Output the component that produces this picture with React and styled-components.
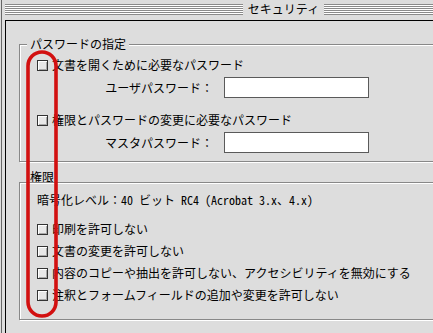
import React from 'react'
import styled, { createGlobalStyle } from 'styled-components'

const Global = createGlobalStyle`
  html, body {
    margin: 0;
    padding: 0;
    background: #dddddd;
    overflow: hidden;
  }
  body {
    font-family: "Noto Sans CJK JP", "Noto Sans", sans-serif;
    font-size: 12px;
    color: #000;
  }
`

const permissions = [
  '印刷を許可しない',
  '文書の変更を許可しない',
  '内容のコピーや抽出を許可しない、アクセシビリティを無効にする',
  '注釈とフォームフィールドの追加や変更を許可しない',
]

export default function App() {
  return (
    <Page>
      <Global />
      <Frame>
        <TitleBar>
          <Stripes />
          <Title>セキュリティ</Title>
          <Stripes />
        </TitleBar>
        <Content>
          <Group>
            <Legend>パスワードの指定</Legend>
            <GroupBody>
              <Block>
                <CheckRow>
                  <Box />
                  <span>文書を開くために必要なパスワード</span>
                </CheckRow>
                <FieldRow>
                  <FieldLabel>ユーザパスワード：</FieldLabel>
                  <Input />
                </FieldRow>
              </Block>
              <Block>
                <CheckRow>
                  <Box />
                  <span>権限とパスワードの変更に必要なパスワード</span>
                </CheckRow>
                <FieldRow>
                  <FieldLabel>マスタパスワード：</FieldLabel>
                  <Input />
                </FieldRow>
              </Block>
            </GroupBody>
          </Group>

          <Heading>権限</Heading>
          <Panel>
            <TextRow>
              暗号化レベル：<Latin>40 </Latin>ビット<Latin> RC4 (Acrobat 3.x</Latin>、<Latin>4.x)</Latin>
            </TextRow>
            <CheckList>
              {permissions.map((t) => (
                <CheckRow key={t}>
                  <Box />
                  <span>{t}</span>
                </CheckRow>
              ))}
            </CheckList>
          </Panel>
        </Content>
      </Frame>

      <Mark width="32" height="268" viewBox="0 0 32 268">
        <rect x="2" y="2" width="28" height="264" rx="14" ry="14" fill="none" stroke="#d21010" strokeWidth="3.6" />
      </Mark>
    </Page>
  )
}

const Page = styled.div`
  position: relative;
  width: 433px;
  height: 333px;
  overflow: hidden;
`

const Frame = styled.div`
  width: 560px;
  height: 333px;
  margin-left: 1px;
  border-left: 1px solid #666;
  display: flex;
  flex-direction: column;
`

const TitleBar = styled.div`
  height: 20px;
  box-sizing: border-box;
  padding: 4px 0 0 3px;
  display: flex;
  align-items: flex-start;
`

const Stripes = styled.div`
  flex: 1;
  height: 11px;
  background: repeating-linear-gradient(to bottom, #8a8a8a 0 1px, #ffffff 1px 2px);
`

const Title = styled.div`
  padding: 0 5px;
  margin-top: -1px;
  line-height: 12px;
`

const Content = styled.div`
  flex: 1;
  margin-left: 3px;
  border-top: 1px solid #000;
  border-left: 1px solid #000;
  padding: 15px 0 0 13px;
  display: flex;
  flex-direction: column;
  align-items: stretch;
`

const Group = styled.fieldset`
  width: 500px;
  margin: 0;
  padding: 5px 0 8px 0;
  border: 1px solid #888;
  box-shadow: inset 1px 1px 0 #fff, 1px 1px 0 #fff;
  min-inline-size: 0;
`

const Legend = styled.legend`
  margin-left: 7px;
  padding: 0 3px;
  line-height: 16px;
  background: #dddddd;
`

const GroupBody = styled.div`
  padding-left: 17px;
  display: flex;
  flex-direction: column;
  gap: 14px;
`

const Block = styled.div`
  display: flex;
  flex-direction: column;
  gap: 4px;
`

const CheckRow = styled.div`
  display: flex;
  align-items: center;
  gap: 4px;
  height: 16px;
  line-height: 16px;
  white-space: nowrap;
`

const Box = styled.span`
  width: 11px;
  height: 11px;
  box-sizing: border-box;
  border: 1px solid #333;
  background: #e8e8e8;
  box-shadow: inset 1px 1px 0 #fff, inset -1px -1px 0 #a8a8a8;
  flex: none;
`

const FieldRow = styled.div`
  display: flex;
  align-items: center;
  gap: 11px;
  height: 21px;
`

const FieldLabel = styled.span`
  width: 176px;
  text-align: right;
  white-space: nowrap;
`

const Input = styled.div`
  width: 145px;
  height: 21px;
  box-sizing: border-box;
  border: 1px solid #5a5a5a;
  background: #fff;
`

const Heading = styled.div`
  margin-top: 9px;
  padding-left: 11px;
  height: 11px;
  line-height: 12px;
`

const Panel = styled.div`
  width: 502px;
  box-sizing: border-box;
  padding: 9px 0 16px 17px;
  border: 1px solid #888;
  box-shadow: inset 1px 1px 0 #fff, 1px 1px 0 #fff;
  display: flex;
  flex-direction: column;
  gap: 13px;
`

const TextRow = styled.div`
  height: 16px;
  line-height: 16px;
  white-space: nowrap;
`

const Latin = styled.span`
  font-feature-settings: "hwid";
`

const CheckList = styled.div`
  display: flex;
  flex-direction: column;
  gap: 6px;
`

const Mark = styled.svg`
  position: absolute;
  left: 26px;
  top: 50px;
  pointer-events: none;
`
